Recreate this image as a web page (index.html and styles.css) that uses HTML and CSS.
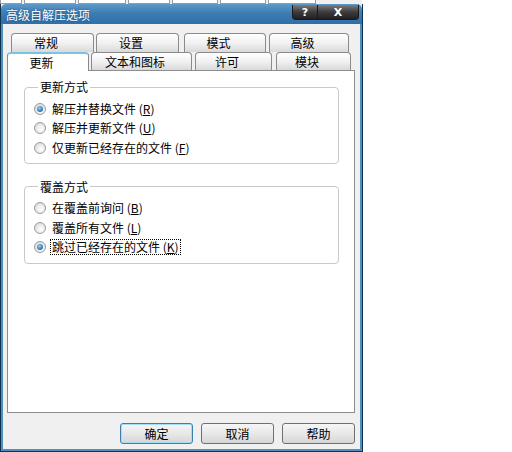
FILE: index.html
```html
<!DOCTYPE html>
<html>
<head>
<meta charset="utf-8">
<title>高级自解压选项</title>
<link rel="stylesheet" href="styles.css">
</head>
<body>
<div class="behind">
	<span class="btab bt1">规</span>
	<span class="btab bt2">高级</span>
	<span class="btab bt3">选项</span>
	<span class="btab bt4">文件</span>
	<span class="btab bt5">备份</span>
	<span class="btab bt6">时间</span>
	<span class="btab bt7">注释</span>
</div>
<div class="dialog">
	<div class="titlebar">
		<span class="title">高级自解压选项</span>
		<div class="caption_btns">
			<span class="cbtn help">?</span>
			<span class="cbtn close">X</span>
		</div>
	</div>
	<div class="client">
		<div class="tabrow back">
			<div class="tab t_gen">常规</div>
			<div class="tab t_set">设置</div>
			<div class="tab t_mode">模式</div>
			<div class="tab t_adv">高级</div>
		</div>
		<div class="tabrow front">
			<div class="tab sel t_upd">更新</div>
			<div class="tab t_txt">文本和图标</div>
			<div class="tab t_lic">许可</div>
			<div class="tab t_mod">模块</div>
		</div>
		<div class="panel">
			<fieldset class="group g1">
				<legend>更新方式</legend>
				<div class="opt"><span class="radio on"></span><span class="lbl">解压并替换文件 (<u>R</u>)</span></div>
				<div class="opt"><span class="radio"></span><span class="lbl">解压并更新文件 (<u>U</u>)</span></div>
				<div class="opt"><span class="radio"></span><span class="lbl">仅更新已经存在的文件 (<u>F</u>)</span></div>
			</fieldset>
			<fieldset class="group g2">
				<legend>覆盖方式</legend>
				<div class="opt"><span class="radio"></span><span class="lbl">在覆盖前询问 (<u>B</u>)</span></div>
				<div class="opt"><span class="radio"></span><span class="lbl">覆盖所有文件 (<u>L</u>)</span></div>
				<div class="opt"><span class="radio on"></span><span class="lbl focus">跳过已经存在的文件 (<u>K</u>)</span></div>
			</fieldset>
		</div>
		<div class="buttons">
			<span class="btn def">确定</span>
			<span class="btn">取消</span>
			<span class="btn">帮助</span>
		</div>
	</div>
</div>
</body>
</html>
```

FILE: styles.css
```css
*{ padding:0; margin:0; box-sizing:border-box; }
body{ background:#fff; font-family:"Noto Sans CJK SC", "Liberation Sans", sans-serif; font-size:12px; color:#000; width:512px; height:452px; overflow:hidden; }
u{ text-decoration:underline; text-underline-offset:1px; }

/* window behind the dialog */
.behind{ display:flex; align-items:flex-end; height:4px; width:362px; overflow:hidden; background:#f0f0f0; }
.btab{ flex:none; height:18px; line-height:16px; text-align:center; background:#fff; border:1px solid #9a9a9a; border-top:none; margin-right:2px; }
.bt1{ width:22px; }
.bt2{ width:52px; }
.bt3{ width:48px; }
.bt4{ width:42px; }
.bt5{ width:46px; }
.bt6{ width:46px; }
.bt7{ width:48px; }

/* dialog frame */
.dialog{ width:363px; height:448px; display:flex; flex-direction:column; border:1px solid #12314d; border-top:none; background:#f0f0f0; }
.titlebar{ height:20px; flex:none; display:flex; align-items:flex-start; justify-content:space-between; background:linear-gradient(#5e9acb, #3d7db4 45%, #2f6ea6); border-radius:5px 5px 0 0; }
.title{ color:#fff; font-size:12px; line-height:18px; padding:2px 0 0 5px; text-shadow:0 0 2px #1d4a72; }
.caption_btns{ display:flex; margin-right:3px; margin-top:1px; }
.cbtn{ height:15px; color:#fff; font-family:"DejaVu Sans", sans-serif; font-weight:bold; font-size:11px; line-height:15px; text-align:center; background:linear-gradient(#7c7c7c, #3c3c3c 50%, #202020); border:1px solid #1a1a1a; border-top:none; }
.help{ width:26px; border-radius:0 0 0 4px; }
.close{ width:41px; border-left:none; border-radius:0 0 4px 0; }

.client{ flex:1; display:flex; flex-direction:column; padding:9px 5px 5px 4px; border:2px solid #4d90bd; border-top:none; }

/* tabs */
.tabrow{ display:flex; flex:none; }
.back{ height:19px; padding-left:4px; }
.front{ height:18px; }
.tab{ flex:none; height:100%; line-height:17px; text-align:center; padding-right:13px; border:1px solid #8a8a8a; border-bottom:none; border-radius:4px 4px 0 0; background:linear-gradient(#ffffff, #f1f1f1 50%, #d9d9d9); }
.t_gen{ width:83px; }
.t_set{ width:83px; margin-left:2px; }
.t_mode{ width:82px; margin-left:5px; }
.t_adv{ width:80px; margin-left:3px; }
.t_upd{ width:82px; }
.t_txt{ width:101px; margin-left:2px; }
.t_lic{ width:77px; margin-left:3px; }
.t_mod{ width:75px; margin-left:4px; }
.tab.sel{ background:#fff; border-color:#8a8a8a; border-top:2px solid #7ac3e2; position:relative; z-index:1; margin-bottom:-1px; height:19px; }

.panel{ flex:none; height:343px; background:#fff; border:1px solid #8e8e8e; padding:9px 15px 0 16px; }

/* group boxes */
.group{ border:1px solid #c9c9c9; border-radius:4px; padding:5px 0 5px 9px; }
.group legend{ padding:0 2px; margin-left:4px; line-height:14px; }
.g2{ margin-top:16px; padding-bottom:6px; }
.opt{ display:flex; align-items:center; height:19.5px; }
.radio{ flex:none; width:12px; height:12px; border-radius:50%; border:1px solid #9a9a9a; background:radial-gradient(circle at 60% 65%, #ffffff, #e6e6e6 60%, #cfcfcf); margin-right:5px; position:relative; }
.radio.on::after{ content:""; position:absolute; left:2px; top:2px; width:6px; height:6px; border-radius:50%; background:radial-gradient(circle at 40% 35%, #8fd3f5, #2a6fa8 70%, #1e4f86); }
.lbl{ white-space:nowrap; line-height:14px; padding:0 1px; }
.lbl.focus{ outline:1px dotted #000; outline-offset:0; }

/* buttons */
.buttons{ display:flex; justify-content:flex-end; gap:8px; margin-top:10px; }
.btn{ width:73px; height:21px; line-height:19px; text-align:center; border:1px solid #707070; border-radius:3px; background:linear-gradient(#f6f6f6, #e8e8e8 50%, #d6d6d6); }
.btn.def{ border-color:#3c7fb1; box-shadow:inset 0 0 0 1px #a8dcf4; }
```
